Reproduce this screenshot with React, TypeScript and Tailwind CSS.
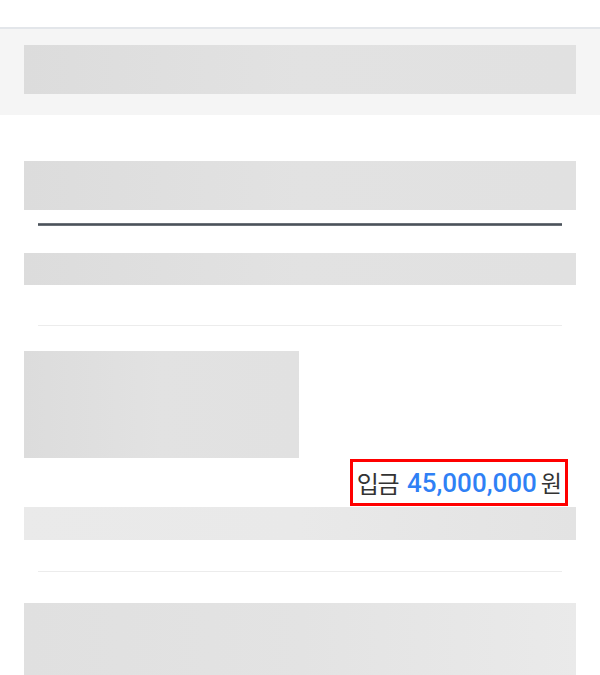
import React from "react";

function Block({ className }: { className: string }) {
  return <div className={`bg-gradient-to-r from-[#dcdcdc] via-[#e2e2e2] to-[#e1e1e1] ${className}`} />;
}

export default function App() {
  return (
    <div className="w-[600px] h-[675px] overflow-hidden bg-white font-['Roboto','Noto_Sans_CJK_KR',sans-serif]">
      <div className="h-[27px]" />
      <div className="border-t-2 border-[#e3e6ea] bg-[#f5f5f5] px-6 pt-4 pb-[21px]">
        <Block className="h-[49px]" />
      </div>

      <div className="px-6 pt-[46px] flex flex-col">
        <Block className="h-[49px]" />
        <div className="mx-[14px] mt-[13px] h-[3px] bg-[#4b525a] border-y border-[#6b7178]" />
        <Block className="mt-[27px] h-[32px]" />
        <div className="mx-[14px] mt-[40px] h-[1px] bg-[#ececec]" />
        <Block className="mt-[25px] h-[107px] w-[275px]" />

        <div className="flex justify-end">
          <div className="mr-2 mt-[1px] flex h-[47px] items-center whitespace-nowrap border-[3px] border-[#ff0000] pl-[4px] pr-[3px]">
            <span className="shrink-0 text-[24px] leading-none tracking-[-1.5px] text-[#333333] font-['Noto_Sans_CJK_KR',sans-serif]">입금</span>
            <span className="ml-[9px] shrink-0 text-[26px] leading-none font-medium text-[#2f80f5]">45,000,000</span>
            <span className="ml-[4px] shrink-0 text-[23px] leading-none text-[#333333] font-['Noto_Sans_CJK_KR',sans-serif]">원</span>
          </div>
        </div>

        <div className="mt-[1px] h-[33px] bg-gradient-to-r from-[#eaeaea] via-[#e9e9e9] to-[#e3e3e3]" />
        <div className="mx-[14px] mt-[31px] h-[1px] bg-[#ececec]" />
        <div className="mt-[31px] h-[80px] bg-gradient-to-r from-[#e0e0e0] via-[#e3e3e3] to-[#eaeaea]" />
      </div>
    </div>
  );
}
